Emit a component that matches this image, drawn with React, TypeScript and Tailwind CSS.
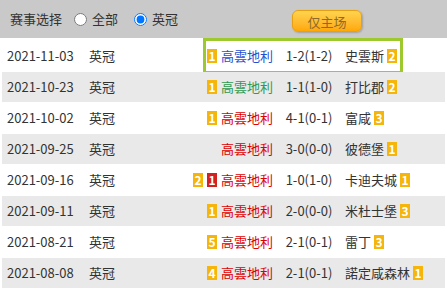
import React from "react";

type Row = {
  date: string;
  home: string;
  homeColor: string;
  score: string;
  away: string;
  hb: { n: string; red?: boolean }[];
  ab: string;
};

const rows: Row[] = [
  { date: "2021-11-03", home: "高雲地利", homeColor: "text-[#1f4fd0]", score: "1-2(1-2)", away: "史雲斯", hb: [{ n: "1" }], ab: "2" },
  { date: "2021-10-23", home: "高雲地利", homeColor: "text-[#2f9a4f]", score: "1-1(1-0)", away: "打比郡", hb: [{ n: "1" }], ab: "2" },
  { date: "2021-10-02", home: "高雲地利", homeColor: "text-[#dd0000]", score: "4-1(0-1)", away: "富咸", hb: [{ n: "1" }], ab: "3" },
  { date: "2021-09-25", home: "高雲地利", homeColor: "text-[#dd0000]", score: "3-0(0-0)", away: "彼德堡", hb: [], ab: "1" },
  { date: "2021-09-16", home: "高雲地利", homeColor: "text-[#dd0000]", score: "1-0(1-0)", away: "卡迪夫城", hb: [{ n: "2" }, { n: "1", red: true }], ab: "1" },
  { date: "2021-09-11", home: "高雲地利", homeColor: "text-[#dd0000]", score: "2-0(0-0)", away: "米杜士堡", hb: [{ n: "1" }], ab: "3" },
  { date: "2021-08-21", home: "高雲地利", homeColor: "text-[#dd0000]", score: "2-1(0-1)", away: "雷丁", hb: [{ n: "5" }], ab: "3" },
  { date: "2021-08-08", home: "高雲地利", homeColor: "text-[#dd0000]", score: "2-1(0-1)", away: "諾定咸森林", hb: [{ n: "4" }], ab: "1" },
];

function Badge({ n, red }: { n: string; red?: boolean }) {
  return (
    <span
      className={`inline-flex items-center justify-center w-[10px] h-[14px] text-[12px] leading-none font-bold text-white ${
        red ? "bg-[#d42020]" : "bg-[#f5b50a]"
      }`}
    >
      {n}
    </span>
  );
}

export default function App() {
  return (
    <div
      className="w-[447px] h-[290px] overflow-hidden bg-white text-[13px] text-[#333]"
      style={{ fontFamily: '"Noto Sans CJK SC", "Noto Sans", sans-serif' }}
    >
      <div className="h-[38px] bg-[#c9c9c9] flex items-center pl-[10px] relative">
        <span className="mr-[12px]">赛事选择</span>
        <label className="flex items-center mr-[16px]">
          <input type="radio" name="r" className="w-[13px] h-[13px] m-0 mr-[5px]" />
          <span>全部</span>
        </label>
        <label className="flex items-center">
          <input type="radio" name="r" defaultChecked className="w-[13px] h-[13px] m-0 mr-[5px]" />
          <span>英冠</span>
        </label>
        <button className="absolute left-[292px] top-[10px] w-[70px] h-[22px] rounded-[6px] border border-[#e8a010] bg-gradient-to-b from-[#ffd44d] to-[#ffa800] text-[#8d6b2c] text-[13px] leading-none shadow-[1px_1px_2px_rgba(0,0,0,0.2)]">
          仅主场
        </button>
      </div>
      <div className="px-[2px] pt-[3px] flex flex-col gap-[1px]">
        {rows.map((r, i) => (
          <div
            key={i}
            className={`relative h-[30px] flex items-center ${i % 2 === 1 ? "bg-[#e9e9e9]" : "bg-white"}`}
          >
            <div className="w-[80px] pl-[5px] whitespace-nowrap">{r.date}</div>
            <div className="w-[40px] pl-[7px]">英冠</div>
            <div className="w-[156px] flex items-center justify-end gap-[4px] pr-[5px]">
              {r.hb.map((b, j) => (
                <Badge key={j} n={b.n} red={b.red} />
              ))}
              <span className={`${r.homeColor} whitespace-nowrap`}>{r.home}</span>
            </div>
            <div className="w-[62px] text-center whitespace-nowrap">{r.score}</div>
            <div className="flex items-center gap-[3px] pl-[5px] whitespace-nowrap">
              <span>{r.away}</span>
              <Badge n={r.ab} />
            </div>
            {i === 0 && (
              <div className="absolute left-[201px] top-[-3px] w-[200px] h-[36px] border-[3px] border-[#9dc92e] pointer-events-none" />
            )}
          </div>
        ))}
      </div>
    </div>
  );
}
